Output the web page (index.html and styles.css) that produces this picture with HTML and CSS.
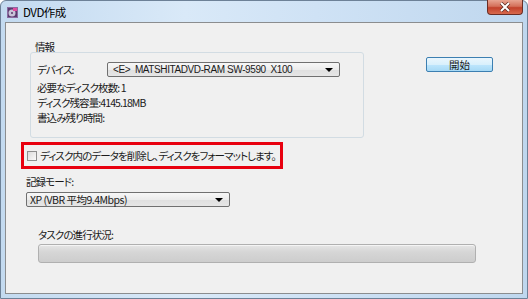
FILE: index.html
```html
<!DOCTYPE html>
<html lang="ja">
<head>
    <meta charset="UTF-8">
    <title>DVD作成</title>
    <link rel="stylesheet" href="styles.css">
</head>

<body>
    <!-- ウィンドウ全体 -->
    <div class="window">
        <!-- タイトルバー -->
        <div class="titlebar">
            <svg class="app-icon" width="11" height="11" viewBox="0 0 11 11">
                <rect x="0" y="0" width="11" height="11" fill="#5a3a6e"/>
                <rect x="0.5" y="0.5" width="10" height="10" fill="none" stroke="#8a6aa0"/>
                <circle cx="5" cy="6" r="3.5" fill="#c9c2d8"/>
                <circle cx="5" cy="6" r="1" fill="#5a3a6e"/>
                <rect x="6" y="1" width="4" height="3" fill="#e04aa0"/>
            </svg>
            <span class="title">DVD作成</span>
            <div class="close-btn">
                <svg width="14" height="10" viewBox="0 0 14 10">
                    <path d="M3 1 L11 9 M11 1 L3 9" stroke="#5a2a22" stroke-width="3.4"/>
                    <path d="M3 1 L11 9 M11 1 L3 9" stroke="#fff" stroke-width="2"/>
                </svg>
            </div>
        </div>

        <!-- クライアント領域 -->
        <div class="client">
            <div class="top-row">
                <div class="group">
                    <div class="group-label">情報</div>
                    <div class="group-box">
                        <div class="info-row device-row">
                            <span class="device-label">デバイス:</span>
                            <div class="combo device-combo">
                                <span class="combo-text">&lt;E&gt;&nbsp;&nbsp;MATSHITADVD-RAM SW-9590&nbsp;&nbsp;X100</span>
                                <span class="combo-arrow"></span>
                            </div>
                        </div>
                        <div class="info-row first">必要なディスク枚数: 1</div>
                        <div class="info-row">ディスク残容量:4145.18MB</div>
                        <div class="info-row">書込み残り時間:</div>
                    </div>
                </div>
                <div class="start-btn">開始</div>
            </div>

            <!-- フォーマット確認(赤枠) -->
            <label class="format-check">
                <span class="checkbox"></span>
                <span class="check-text">ディスク内のデータを削除し、ディスクをフォーマットします。</span>
            </label>

            <div class="mode-label">記録モード:</div>
            <div class="combo mode-combo">
                <span class="combo-text">XP (VBR 平均9.4Mbps)</span>
                <span class="combo-arrow"></span>
            </div>

            <div class="progress-label">タスクの進行状況:</div>
            <div class="progress"></div>
        </div>
    </div>
</body></html>
```

FILE: styles.css
```css
html,
body {
    margin: 0;
    padding: 0;
}

body {
    font-family: "Noto Sans CJK JP", "Liberation Sans", sans-serif;
    font-size: 10.5px;
    letter-spacing: -0.9px;
    color: #1a1a1a;
    font-feature-settings: "palt";
}

/*ウィンドウ枠*/
.window {
    width: 528px;
    height: 299px;
    box-sizing: border-box;
    border: 1px solid #6d8197;
    border-radius: 6px 6px 0 0;
    padding: 0 4px 4px 4px;
    background: linear-gradient(to right, #c3daf0 0%, #d9e9f8 35%, #cfe2f5 60%, #bfd7ee 100%);
    display: flex;
    flex-direction: column;
}

/*タイトルバー*/
.titlebar {
    height: 21px;
    display: flex;
    align-items: center;
}

.app-icon {
    margin-left: 2px;
    margin-top: 1px;
    flex-shrink: 0;
}

.title {
    margin-left: 5px;
    font-size: 11.5px;
    letter-spacing: -0.5px;
    color: #000;
}

.close-btn {
    margin-left: auto;
    align-self: flex-start;
    width: 36px;
    height: 15px;
    margin-top: -1px;
    box-sizing: border-box;
    border: 1px solid #6b2d24;
    border-top: 0;
    border-radius: 0 0 4px 4px;
    background: linear-gradient(#e8a592 0%, #d4705a 45%, #c2412b 55%, #d86a4e 100%);
    display: flex;
    align-items: center;
    justify-content: center;
}

/*クライアント領域*/
.client {
    flex: 1;
    border: 1px solid #8b8d8f;
    background-color: #f0f0f0;
}

.top-row {
    display: flex;
    margin-top: 18px;
}

.group {
    margin-left: 24px;
    width: 334px;
}

.group-label {
    margin-left: 5px;
    line-height: 11px;
}

.group-box {
    height: 86px;
    box-sizing: border-box;
    border: 1px solid #d2dce3;
    border-radius: 3px;
    padding: 9px 6px 0 6px;
}

.info-row {
    line-height: 15px;
    white-space: nowrap;
}

.info-row.first {
    margin-top: 3px;
}

.device-row {
    display: flex;
    align-items: center;
}

.device-label {
    width: 70px;
    flex-shrink: 0;
}

/*コンボボックス*/
.combo {
    height: 15px;
    box-sizing: border-box;
    border: 1px solid #707070;
    border-radius: 2px;
    background: linear-gradient(#f7f7f7 0%, #ececec 50%, #dfdfdf 51%, #e6e6e6 100%);
    display: flex;
    align-items: center;
    padding: 0 6px 0 3px;
}

.combo-text {
    flex: 1;
    line-height: 13px;
    white-space: nowrap;
}

.device-combo {
    width: 233px;
    flex-shrink: 0;
}

.device-combo .combo-text {
    font-family: "Liberation Sans", sans-serif;
    font-size: 10px;
    letter-spacing: -0.4px;
    padding-left: 2px;
}

.mode-combo .combo-text {
    letter-spacing: -0.5px;
}

.combo-arrow {
    width: 0;
    height: 0;
    flex-shrink: 0;
    border-left: 4px solid transparent;
    border-right: 4px solid transparent;
    border-top: 4px solid #000;
}

.start-btn {
    margin-left: 62px;
    margin-top: 16px;
    width: 67px;
    height: 15px;
    box-sizing: border-box;
    border: 1px solid #3c7fb1;
    border-radius: 2px;
    background: linear-gradient(#eaf6fd 0%, #d9f0fc 50%, #bee6fd 51%, #a7d9f5 100%);
    text-align: center;
    line-height: 13px;
    letter-spacing: 0;
}

/*赤枠*/
.format-check {
    display: flex;
    align-items: center;
    width: 262px;
    height: 27px;
    box-sizing: border-box;
    margin: 4px 0 0 15px;
    border: 3px solid #e8000f;
    padding-left: 3px;
}

.checkbox {
    width: 10px;
    height: 10px;
    flex-shrink: 0;
    box-sizing: border-box;
    border: 1px solid #8e8f8f;
    background: linear-gradient(135deg, #dcdcdc, #fafafa);
}

.check-text {
    margin-left: 3px;
    white-space: nowrap;
}

.mode-label {
    margin: 7px 0 0 20px;
    line-height: 12px;
}

.mode-combo {
    margin: 4px 0 0 20px;
    width: 204px;
}

.progress-label {
    margin: 22px 0 0 32px;
    line-height: 12px;
}

.progress {
    margin: 3px 0 0 32px;
    width: 438px;
    height: 19px;
    box-sizing: border-box;
    border: 1px solid #b0b0b0;
    border-radius: 3px;
    background: linear-gradient(#e6e6e6 0%, #d6d6d6 40%, #cdcdcd 100%);
    box-shadow: inset 0 1px 0 #f4f4f4;
}
```
